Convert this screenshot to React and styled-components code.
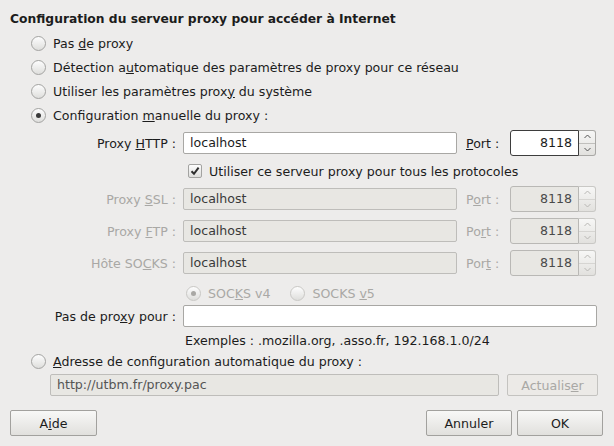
import styled, { createGlobalStyle } from "styled-components";

const Global = createGlobalStyle`
  html, body {
    margin: 0;
    padding: 0;
    background: #edeceb;
  }
  body {
    font-family: "DejaVu Sans", "Liberation Sans", sans-serif;
    font-size: 12.6px;
    color: #1c1c1c;
  }
`

const Dialog = styled.div`
  width: 614px;
  height: 446px;
  box-sizing: border-box;
  padding: 9px 11px 0 10px;
  display: flex;
  flex-direction: column;
`
const Title = styled.div`
  font-weight: bold;
  font-size: 12.3px;
  height: 21px;
  line-height: 21px;
  margin-bottom: 1px;
`
const RadioRow = styled.label`
  display: flex;
  align-items: center;
  gap: 7px;
  height: ${p => p.$h || 24}px;
  margin-top: ${p => p.$mt || 0}px;
  padding-left: ${p => p.$indent ?? 21}px;
  color: ${p => p.$disabled ? '#a9a8a5' : 'inherit'};
`
const Radio = styled.span`
  width: 13px;
  height: 13px;
  border-radius: 50%;
  border: 1px solid ${p => p.$disabled ? '#c9c8c5' : '#a3a3a1'};
  background: linear-gradient(#fdfdfd, #dededc);
  display: flex;
  align-items: center;
  justify-content: center;
  flex: none;

  &::after {
    content: '';
    display: ${p => p.$checked ? 'block' : 'none'};
    width: 5px;
    height: 5px;
    border-radius: 50%;
    background: ${p => p.$disabled ? '#a9a8a5' : '#3a3a3a'};
  }
`
const ProxyGrid = styled.div`
  display: grid;
  grid-template-columns: 173px 274px 53px 86px;
  grid-template-rows: 26px 18px 26px 26px 26px;
  row-gap: 6px;
  margin-top: 3px;
  align-items: center;

  & > .check {
    grid-column: 2 / 5;
  }
`
const FieldLabel = styled.span`
  text-align: right;
  padding-right: 7px;
  color: ${p => p.$disabled ? '#a9a8a5' : 'inherit'};
`
const PortLabel = styled.span`
  padding-left: 9px;
  color: ${p => p.$disabled ? '#a9a8a5' : 'inherit'};
`
const Input = styled.div`
  height: 22px;
  box-sizing: border-box;
  border: 1px solid ${p => p.$disabled ? '#bebdba' : '#a8a7a4'};
  border-radius: 2px;
  background: ${p => p.$disabled ? '#e8e7e3' : '#ffffff'};
  padding: 0 6px;
  line-height: 20px;
  white-space: nowrap;
  overflow: hidden;
  color: ${p => p.$disabled ? '#3a3a3a' : 'inherit'};
`
const Spin = styled.div`
  display: flex;
  height: 26px;
`
const SpinField = styled.div`
  flex: 1;
  box-sizing: border-box;
  border: 1px solid ${p => p.$focus ? '#3d3d3d' : '#b9b8b5'};
  border-radius: 3px 0 0 3px;
  background: ${p => p.$disabled ? '#e8e7e3' : '#ffffff'};
  text-align: right;
  padding-right: 6px;
  line-height: 24px;
  color: ${p => p.$disabled ? '#4a4a4a' : 'inherit'};
`
const SpinButtons = styled.div`
  width: 17px;
  box-sizing: border-box;
  border: 1px solid ${p => p.$disabled ? '#c9c8c5' : '#a9a8a5'};
  border-left: none;
  border-radius: 0 3px 3px 0;
  background: linear-gradient(#f7f7f6, #e2e1de);
  display: flex;
  flex-direction: column;

  & > span {
    flex: 1;
    display: flex;
    align-items: center;
    justify-content: center;
  }
  & > span + span {
    border-top: 1px solid ${p => p.$disabled ? '#d6d5d2' : '#c0bfbc'};
  }
`
const CheckRow = styled.label`
  display: flex;
  align-items: center;
  gap: 7px;
  padding-left: 5px;
`
const CheckBox = styled.span`
  width: 12px;
  height: 12px;
  border: 1px solid #a3a3a1;
  border-radius: 2px;
  background: linear-gradient(#fdfdfd, #dededc);
  display: flex;
  align-items: center;
  justify-content: center;
`
const SocksRow = styled.div`
  display: flex;
  gap: 20px;
  height: 22px;
  margin: 6px 0 1px 176px;
`
const NoProxyRow = styled.div`
  display: grid;
  grid-template-columns: 173px 414px;
  align-items: center;
`
const Hint = styled.div`
  margin: 6px 0 0 175px;
  height: 16px;
  line-height: 16px;
`
const PacRow = styled.div`
  display: flex;
  gap: 8px;
  margin: 2px 0 0 40px;
  width: 548px;

  & > div:first-child {
    flex: 1;
    color: #555;
  }
`
const Button = styled.div`
  width: ${p => p.$w || 86}px;
  height: ${p => p.$h || 26}px;
  box-sizing: border-box;
  border: 1px solid ${p => p.$disabled ? '#c4c3c0' : '#a2a19e'};
  border-radius: 2px;
  background: ${p => p.$disabled ? '#eceae7' : 'linear-gradient(#f8f8f7, #e1e0dd)'};
  color: ${p => p.$disabled ? '#a9a8a5' : 'inherit'};
  display: flex;
  align-items: center;
  justify-content: center;
`
const Footer = styled.div`
  display: flex;
  gap: 5px;
  margin-top: 14px;

  & > div:first-child {
    margin-right: auto;
  }
`

function Chevron({ up, color }) {
  return (
    <svg width="7" height="5" viewBox="0 0 7 5">
      <path d={up ? "M0.5 4L3.5 1L6.5 4" : "M0.5 1L3.5 4L6.5 1"} fill="none" stroke={color} strokeWidth="1" />
    </svg>
  )
}

function PortSpin({ disabled, focus }) {
  const c = disabled ? '#b8b7b4' : '#555'
  return (
    <Spin>
      <SpinField $disabled={disabled} $focus={focus}>8118</SpinField>
      <SpinButtons $disabled={disabled}>
        <span><Chevron up color={c} /></span>
        <span><Chevron color={c} /></span>
      </SpinButtons>
    </Spin>
  )
}

const rows = [
  { label: <>Proxy <u>S</u>SL :</>, port: <>P<u>o</u>rt :</> },
  { label: <>Proxy <u>F</u>TP :</>, port: <>Po<u>r</u>t :</> },
  { label: <>Hôte SO<u>C</u>KS :</>, port: <>Por<u>t</u> :</> },
]

export default function App() {
  return <>
    <Global />
    <Dialog>
      <Title>Configuration du serveur proxy pour accéder à Internet</Title>
      <RadioRow><Radio /><span>Pas <u>d</u>e proxy</span></RadioRow>
      <RadioRow><Radio /><span>Détection a<u>u</u>tomatique des paramètres de proxy pour ce réseau</span></RadioRow>
      <RadioRow><Radio /><span>Utiliser les paramètres prox<u>y</u> du système</span></RadioRow>
      <RadioRow><Radio $checked /><span>Configuration <u>m</u>anuelle du proxy :</span></RadioRow>

      <ProxyGrid>
        <FieldLabel>Proxy <u>H</u>TTP :</FieldLabel>
        <Input>localhost</Input>
        <PortLabel><u>P</u>ort :</PortLabel>
        <PortSpin focus />

        <CheckRow className="check">
          <CheckBox>
            <svg width="10" height="10" viewBox="0 0 10 10">
              <path d="M1.5 5.2L4 7.8L8.6 1.6" fill="none" stroke="#2e2e2e" strokeWidth="2" />
            </svg>
          </CheckBox>
          <span>Utiliser ce serveur proxy pour tous les protocoles</span>
        </CheckRow>

        {rows.map((r, i) => [
          <FieldLabel key={'l' + i} $disabled>{r.label}</FieldLabel>,
          <Input key={'i' + i} $disabled>localhost</Input>,
          <PortLabel key={'p' + i} $disabled>{r.port}</PortLabel>,
          <PortSpin key={'s' + i} disabled />,
        ])}
      </ProxyGrid>

      <SocksRow>
        <RadioRow $disabled $indent={0} $h={22}><Radio $checked $disabled /><span>SOC<u>K</u>S v4</span></RadioRow>
        <RadioRow $disabled $indent={0} $h={22}><Radio $disabled /><span>SOCKS <u>v</u>5</span></RadioRow>
      </SocksRow>

      <NoProxyRow>
        <FieldLabel>Pas de pro<u>x</u>y pour :</FieldLabel>
        <Input />
      </NoProxyRow>
      <Hint>Exemples : .mozilla.org, .asso.fr, 192.168.1.0/24</Hint>

      <RadioRow $mt={1} $h={22}><Radio /><span><u>A</u>dresse de configuration automatique du proxy :</span></RadioRow>
      <PacRow>
        <Input $disabled>http://utbm.fr/proxy.pac</Input>
        <Button $disabled $w={91} $h={22}>Actualis<u>e</u>r</Button>
      </PacRow>

      <Footer>
        <Button $w={87}>A<u>i</u>de</Button>
        <Button>Annuler</Button>
        <Button>OK</Button>
      </Footer>
    </Dialog>
  </>
}
